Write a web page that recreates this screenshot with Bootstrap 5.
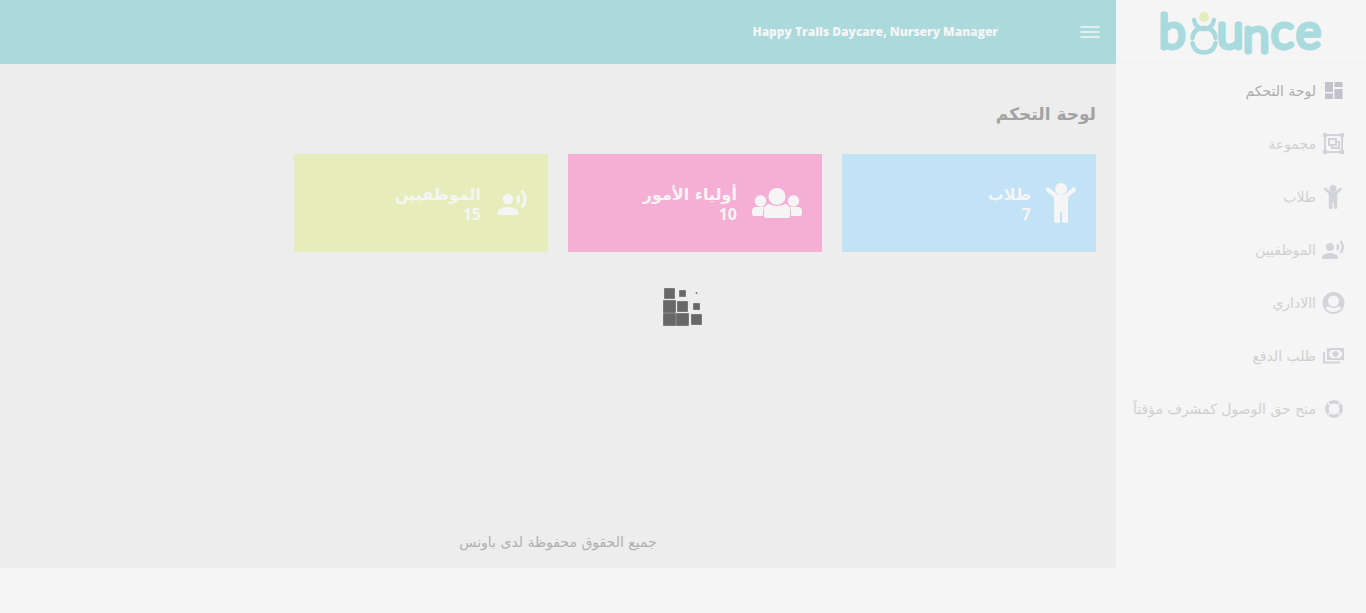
<!DOCTYPE html>
<html lang="ar" dir="rtl">
<head>
<meta charset="utf-8">
<meta name="viewport" content="width=device-width, initial-scale=1">
<title>Bounce - لوحة التحكم</title>
<link rel="stylesheet" href="https://cdn.jsdelivr.net/npm/bootstrap@5.3.0/dist/css/bootstrap.min.css">
<style>
  body { background: #f5f5f5; font-family: "DejaVu Sans", sans-serif; font-size: 14px; line-height: 20px; color: #b0b0b0; }
  .side-menu { width: 250px; background: #f5f5f5; }
  .brand-bar { height: 64px; border-bottom: 1px solid #f1f1f1; line-height: 0; }
  .brand-bar svg { direction: ltr; }
  .menu-link { height: 53px; padding: 0 20px; gap: 4px; color: #d0d0d0; text-decoration: none; white-space: nowrap; }
  .menu-link.active { color: #acacac; }
  .menu-link svg { width: 26px; height: 24px; fill: #d3d4da; color: #d3d4da; flex: none; }
  .menu-link.active svg { fill: #c1c2ca; }
  .top-bar { height: 64px; background: #acd9dc; padding: 0 16px; gap: 82px; }
  .top-bar .user-name { font: 800 12px/20px "Open Sans", sans-serif; color: #f5f5f5; }
  .toggle { border: 0; padding: 0; background: none; line-height: 0; }
  .page-area { background: #ededed; min-height: calc(100vh - 109px); padding: 38px 20px 16px; }
  .page-title { font-size: 17px; line-height: 24px; font-weight: 700; color: #a3a3a3; margin: 0 0 28px; }
  .stats { --bs-gutter-x: 20px; --bs-gutter-y: 20px; }
  .stat { height: 98px; padding: 0 20px; gap: 15px; color: #f5f5f5; text-decoration: none; }
  .stat svg { fill: #f5f5f5; flex: none; }
  .stat-text { padding-top: 2px; }
  .stat h2 { font-size: 16px; line-height: 20px; font-weight: 700; margin: 0; }
  .stat strong { display: block; font: 700 16px/18px "Noto Sans", sans-serif; }
  .sky { background: #c2e2f6; } .rose { background: #f5aed4; } .lime { background: #e6ecba; }
  .loader-layer { pointer-events: none; }
</style>
</head>
<body>
<svg width="0" height="0" class="position-absolute" aria-hidden="true">
  <symbol id="i-child" viewBox="0 0 30 40"><circle cx="15" cy="6" r="6"/><path d="M2 6.500 11 14h8l9-7.500" fill="none" stroke="currentColor" stroke-width="4.200" stroke-linecap="round" stroke-linejoin="round"/><path d="M2 6.500 11 14h8l9-7.500" fill="none" stroke="currentColor" stroke-width="4.200"/><path d="M8 13h14v25q0 2-3 2t-3-2V29h-2v9q0 2-3 2t-3-2z"/></symbol>
  <symbol id="i-voice" viewBox="0 0 24 24"><circle cx="9" cy="9" r="4"/><path d="M9 15c-2.670 0-8 1.340-8 4v2h16v-2c0-2.660-5.330-4-8-4zm7.760-9.640-1.680 1.690c.840 1.180.840 2.710 0 3.890l1.680 1.690c2.020-2.020 2.020-5.070 0-7.270zM20.070 2l-1.630 1.630c2.770 3.020 2.770 7.560 0 10.740L20.070 16c3.900-3.890 3.910-9.950 0-14z"/></symbol>
</svg>

<div class="d-flex min-vh-100">
  <aside class="side-menu flex-shrink-0">
    <a href="#" class="brand-bar d-block text-center" aria-label="bounce">
      <svg width="180" height="63" viewBox="0 0 180 63">
        <g font-family="Lato" font-size="48" font-weight="300" fill="#a9dadd" stroke="#a9dadd" stroke-width="5" stroke-linejoin="round">
          <text x="8" y="48">b</text><text x="66" y="48">u</text><text x="92" y="52">n</text><text x="120" y="48">c</text><text x="145" y="48">e</text>
        </g>
        <g fill="none" stroke="#a9dadd" stroke-width="4.500" stroke-linecap="round">
          <path d="M43 20q2 9 10 9t10-9"/>
          <path d="M41.500 38q1-10 11.500-10t11.500 10"/>
          <path d="M41.500 43q2 9.500 11.500 9.500t11.500-9.500"/>
        </g>
        <circle cx="53" cy="17" r="5" fill="#e4ecb7"/>
      </svg>
    </a>
    <nav class="d-flex flex-column">
      <a href="#" class="menu-link active d-flex align-items-center"><svg viewBox="0 0 26 24"><path d="M5 3h8v10H5zM14.500 3h8v5h-8zM5 14.500h8V20H5zM14.500 10h8v10h-8z"/></svg>لوحة التحكم</a>
      <a href="#" class="menu-link d-flex align-items-center"><svg viewBox="0 0 26 24"><path d="M5 3h17v17H5zM9 7h7v6H9zM16 10h3v6h-7v-3" fill="none" stroke="#d3d4da" stroke-width="2"/><path d="M3 1h4v4H3zM20 1h4v4h-4zM3 18h4v4H3zM20 18h4v4h-4z"/></svg>مجموعة</a>
      <a href="#" class="menu-link d-flex align-items-center"><svg><use href="#i-child"/></svg>طلاب</a>
      <a href="#" class="menu-link d-flex align-items-center"><svg><use href="#i-voice"/></svg>الموظفيين</a>
      <a href="#" class="menu-link d-flex align-items-center"><svg viewBox="0 0 26 24"><path fill-rule="evenodd" d="M13.500 1a11 11 0 1 1 0 22a11 11 0 0 1 0-22zm0 3.500a5.500 5.500 0 1 0 0 11a5.500 5.500 0 0 0 0-11zM9 15.500q-3 0-3.500 1.500q3 4 8 4t8-4q-.5-1.500-3.500-1.500q-4.500 3-9 0z"/></svg>االاداري</a>
      <a href="#" class="menu-link d-flex align-items-center"><svg viewBox="0 0 26 24"><path fill-rule="evenodd" d="M7 4h17v12H7zm4 2q0 2-2 2v4q2 0 2 2h9q0-2 2-2V8q-2 0-2-2zM3 8h2v9.500h15v2H3z"/><circle cx="15.500" cy="10" r="3"/></svg>طلب الدفع</a>
      <a href="#" class="menu-link d-flex align-items-center"><svg viewBox="0 0 26 24"><circle cx="14" cy="12" r="7.200" fill="none" stroke="#d3d4da" stroke-width="3.600"/><path d="m8 6 3 3m6 6 3 3M8 18l3-3m6-6 3-3" stroke="#f5f5f5" stroke-width="1.300"/></svg>منح حق الوصول كمشرف مؤقتاً</a>
    </nav>
  </aside>

  <div class="flex-grow-1">
    <header class="top-bar d-flex align-items-center">
      <button type="button" class="toggle" aria-label="القائمة"><svg width="20" height="14"><path d="M1 2h18M1 7h18M1 12h18" stroke="#f5f5f5" stroke-width="1.600" stroke-linecap="round"/></svg></button>
      <span class="user-name" dir="ltr">Happy Trails Daycare, Nursery Manager</span>
    </header>
    <main class="page-area d-flex flex-column">
      <h1 class="page-title">لوحة التحكم</h1>
      <div class="row stats">
        <div class="col-3"><a href="#" class="stat sky d-flex align-items-center"><svg width="30" height="40"><use href="#i-child"/></svg><div class="stat-text"><h2>طلاب</h2><strong>7</strong></div></a></div>
        <div class="col-3"><a href="#" class="stat rose d-flex align-items-center"><svg width="50" height="30" viewBox="0 0 50 30"><circle cx="8.500" cy="13" r="5.700"/><circle cx="41.500" cy="13" r="5.700"/><path d="M0 26v-3q0-4 4-4h9q-2 2-2 4v5H2q-2 0-2-2zM50 26v-3q0-4-4-4h-9q2 2 2 4v5h9q2 0 2-2z"/><circle cx="25" cy="8.500" r="8.500"/><path d="M12 28v-6q0-5 5-6q8 4 16 0q5 1 5 6v6q0 2-2 2H14q-2 0-2-2z"/></svg><div class="stat-text"><h2>أولياء الأمور</h2><strong>10</strong></div></a></div>
        <div class="col-3"><a href="#" class="stat lime d-flex align-items-center"><svg width="32" height="32"><use href="#i-voice"/></svg><div class="stat-text"><h2>الموظفيين</h2><strong>15</strong></div></a></div>
      </div>
      <footer class="mt-auto text-center">جميع الحقوق محفوظة لدى باونس</footer>
    </main>
  </div>
</div>

<div class="loader-layer position-fixed top-0 start-0 w-100 h-100 d-flex align-items-center justify-content-center" role="status" aria-label="جار التحميل">
  <svg width="40" height="40" fill="#686868" stroke="#7b7b7b"><path d="M1.500 1.500h10v10h-10zM16.500 3.500h6v6h-6zM.5 13.500h12v12H.5zM14.500 14.500h10v10h-10zM30.500 16.500h6v6h-6zM.5 26.500h12v12H.5zM13.500 26.500h12v12h-12zM28.500 27.500h10v10h-10zM33 5.500h1v1h-1z"/></svg>
</div>
<script src="https://cdn.jsdelivr.net/npm/bootstrap@5.3.0/dist/js/bootstrap.bundle.min.js"></script>
</body>
</html>
